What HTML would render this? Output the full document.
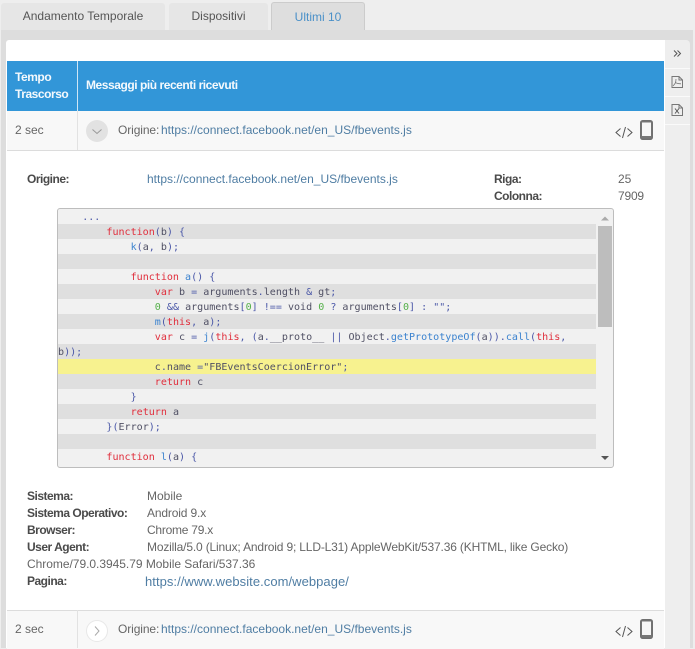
<!DOCTYPE html>
<html><head><meta charset="utf-8">
<style>
html,body{margin:0;padding:0}
body{width:695px;height:648px;overflow:hidden;position:relative;background:#eeeeee;font-family:"Liberation Sans",sans-serif;font-size:12px;color:#666}
.a{position:absolute;white-space:nowrap}
.tab{position:absolute;background:#e6e6e6;text-align:center;color:#555;border-radius:3px 3px 0 0;font-size:12px;line-height:27px;height:27px;top:3px}
.b{font-weight:bold;color:#4a4a4a;letter-spacing:-.5px}
.l{color:#4f7da3}
.ln{position:absolute;left:58px;width:538px;height:15px;white-space:pre;font:10.05px/17px "DejaVu Sans Mono","Liberation Mono",monospace;color:#505064}
.s{background:#dfdfdf}
.y{background:#f7f28f}
i{font-style:normal}
.r{color:#e02f3d}.f{color:#3c83cf}.p{color:#4b58a8}.n{color:#55b04a}
.h{color:#f4f9fd;font-weight:bold;line-height:17px;letter-spacing:-.45px}
</style></head><body>
<div class="tab" style="left:1px;width:164px">Andamento Temporale</div>
<div class="tab" style="left:169px;width:99px">Dispositivi</div>
<div class="tab" style="left:271px;width:94px;top:2px;height:28px;line-height:29px;background:#dedede;color:#4a90c8;border:1px solid #ccc;border-bottom:0;box-sizing:border-box">Ultimi 10</div>
<div class="a" style="left:1px;top:30px;width:692px;height:618px;background:#dddddd"></div>
<div class="a" style="left:6px;top:40px;width:659px;height:608px;background:#fff;border-radius:3px 0 0 0"></div>
<div class="a" style="left:665px;top:40px;width:25px;height:608px;background:#eeeeee;border-radius:0 4px 0 0"></div>
<div class="a" style="left:665px;top:68px;width:25px;height:1px;background:#fafafa"></div>
<div class="a" style="left:665px;top:96px;width:25px;height:1px;background:#fafafa"></div>
<div class="a" style="left:665px;top:124px;width:25px;height:1px;background:#fafafa"></div>
<svg class="a" style="left:665px;top:40px" width="25" height="85" viewBox="0 0 25 85" fill="none" stroke="#666" stroke-width="1">
<path d="M9 10.500l3 3-3 3M12.500 10.500l3 3-3 3" stroke="#555"/>
<path d="M7 36.500h7l3.500 3.500v7.500h-10.500zM14 36.500v3.500h3.500" stroke="#777"/>
<path d="M11 39c0 3.500-1 5-3 7M10 42.500c2 1 4 1.300 6 1.300" stroke="#777" stroke-width=".8"/>
<path d="M7 64.500h7l3.500 3.500v7.500h-10.500zM14 64.500v3.500h3.500" stroke="#777"/>
<path d="M10 68.500l4 5M14 68.500l-4 5" stroke="#555"/>
</svg>

<div class="a" style="left:7px;top:61px;width:657px;height:50px;background:#3296d8"></div>
<div class="a" style="left:77px;top:61px;width:1px;height:50px;background:#cfe6f6"></div>
<div class="a h" style="left:15px;top:69px">Tempo<br>Trascorso</div>
<div class="a h" style="left:86px;top:77px">Messaggi più recenti ricevuti</div>

<div class="a" style="left:7px;top:111px;width:657px;height:39px;background:#f8f8f8;border-bottom:1px solid #dcdcdc"></div>
<div class="a" style="left:77px;top:111px;width:1px;height:39px;background:#e2e2e2"></div>
<div class="a" style="left:15px;top:123px">2 sec</div>
<div class="a" style="left:86px;top:120px;width:22px;height:22px;border-radius:50%;background:#e2e2e2"></div>
<svg class="a" style="left:86px;top:120px" width="22" height="22" fill="none" stroke="#999" stroke-width="1"><path d="M6.500 9.500l4.500 4 4.500-4"/></svg>
<div class="a" style="left:118px;top:123px;letter-spacing:-.1px">Origine:</div>
<div class="a l" style="left:161px;top:123px">https://connect.facebook.net/en_US/fbevents.js</div>
<svg class="a" style="left:613px;top:119px" width="42" height="22" fill="none" stroke="#555" stroke-width="1"><path d="M7.500 9.500l-4.500 4 4.500 4M14.500 9.500l4.500 4-4.500 4M12.500 8l-3 11"/><rect x="27.700" y="1.700" width="11.600" height="18.600" rx="2" fill="#777" stroke="#707070" stroke-width="1.400"/><rect x="29" y="3.500" width="9" height="13.500" fill="#f6f6f6" stroke="none"/></svg>

<div class="a b" style="left:27px;top:172px">Origine:</div>
<div class="a l" style="left:147px;top:172px">https://connect.facebook.net/en_US/fbevents.js</div>
<div class="a b" style="left:494px;top:172px">Riga:</div>
<div class="a" style="left:618px;top:172px">25</div>
<div class="a b" style="left:494px;top:189px">Colonna:</div>
<div class="a" style="left:618px;top:189px;letter-spacing:-.2px">7909</div>

<div class="a" style="left:57px;top:208px;width:555px;height:258px;background:#f1f1f1;border:1px solid #bdbdbd;border-radius:3px"></div>
<div class="ln" style="top:209px">    <i class="p">...</i></div>
<div class="ln s" style="top:224px">        <i class="r">function</i><i class="p">(</i>b<i class="p">) {</i></div>
<div class="ln" style="top:239px">            <i class="f">k</i><i class="p">(</i>a<i class="p">,</i> b<i class="p">);</i></div>
<div class="ln s" style="top:254px"> </div>
<div class="ln" style="top:269px">            <i class="r">function</i> <i class="f">a</i><i class="p">() {</i></div>
<div class="ln s" style="top:284px">                <i class="r">var</i> b <i class="p">=</i> arguments<i class="p">.</i>length <i class="p">&amp;</i> gt<i class="p">;</i></div>
<div class="ln" style="top:299px">                <i class="n">0</i> <i class="p">&amp;&amp;</i> arguments<i class="p">[</i><i class="n">0</i><i class="p">] !==</i> void <i class="n">0</i> <i class="p">?</i> arguments<i class="p">[</i><i class="n">0</i><i class="p">] : "";</i></div>
<div class="ln s" style="top:314px">                <i class="f">m</i><i class="p">(</i><i class="r">this</i><i class="p">,</i> a<i class="p">);</i></div>
<div class="ln" style="top:329px">                <i class="r">var</i> c <i class="p">=</i> <i class="f">j</i><i class="p">(</i><i class="r">this</i><i class="p">, (</i>a<i class="p">.</i>__proto__ <i class="p">||</i> Object<i class="p">.</i><i class="f">getPrototypeOf</i><i class="p">(</i>a<i class="p">)).</i><i class="f">call</i><i class="p">(</i><i class="r">this</i><i class="p">,</i></div>
<div class="ln s" style="top:344px">b<i class="p">));</i></div>
<div class="ln y" style="top:359px">                c<i class="p">.</i>name <i class="p">=</i>"FBEventsCoercionError"<i class="p">;</i></div>
<div class="ln s" style="top:374px">                <i class="r">return</i> c</div>
<div class="ln" style="top:389px">            <i class="p">}</i></div>
<div class="ln s" style="top:404px">            <i class="r">return</i> a</div>
<div class="ln" style="top:419px">        <i class="p">}(</i>Error<i class="p">);</i></div>
<div class="ln s" style="top:434px"> </div>
<div class="ln" style="top:449px">        <i class="r">function</i> <i class="f">l</i><i class="p">(</i>a<i class="p">) {</i></div>
<div class="a" style="left:598px;top:226px;width:14px;height:101px;background:#bdbdbd"></div>
<svg class="a" style="left:598px;top:214px" width="14" height="8"><path d="M3 6.500l4-4 4 4z" fill="#aaa"/></svg>
<svg class="a" style="left:598px;top:454px" width="14" height="8"><path d="M3 2l4 4 4-4z" fill="#555"/></svg>

<div class="a b" style="left:27px;top:489px">Sistema:</div>
<div class="a" style="left:147px;top:489px">Mobile</div>
<div class="a b" style="left:27px;top:506px">Sistema Operativo:</div>
<div class="a" style="left:147px;top:506px;letter-spacing:-.15px">Android 9.x</div>
<div class="a b" style="left:27px;top:523px">Browser:</div>
<div class="a" style="left:147px;top:523px;letter-spacing:-.25px">Chrome 79.x</div>
<div class="a b" style="left:27px;top:540px">User Agent:</div>
<div class="a" style="left:147px;top:540px;letter-spacing:-.165px">Mozilla/5.0 (Linux; Android 9; LLD-L31) AppleWebKit/537.36 (KHTML, like Gecko)</div>
<div class="a" style="left:27px;top:557px;letter-spacing:-.03px">Chrome/79.0.3945.79 Mobile Safari/537.36</div>
<div class="a b" style="left:27px;top:574px">Pagina:</div>
<div class="a l" style="left:145px;top:574px;font-size:13px;letter-spacing:.05px">https://www.website.com/webpage/</div>

<div class="a" style="left:7px;top:610px;width:657px;height:38px;background:#f8f8f8;border-top:1px solid #dcdcdc"></div>
<div class="a" style="left:77px;top:610px;width:1px;height:38px;background:#e2e2e2"></div>
<div class="a" style="left:15px;top:622px">2 sec</div>
<div class="a" style="left:86px;top:620px;width:20px;height:20px;border-radius:50%;background:#fff;border:1px solid #e8e8e8"></div>
<svg class="a" style="left:86px;top:620px" width="22" height="22" fill="none" stroke="#aaa" stroke-width="1"><path d="M9 6.500l4 4.500-4 4.500"/></svg>
<div class="a" style="left:118px;top:622px;letter-spacing:-.1px">Origine:</div>
<div class="a l" style="left:161px;top:622px">https://connect.facebook.net/en_US/fbevents.js</div>
<svg class="a" style="left:613px;top:618px" width="42" height="22" fill="none" stroke="#555" stroke-width="1"><path d="M7.500 9.500l-4.500 4 4.500 4M14.500 9.500l4.500 4-4.500 4M12.500 8l-3 11"/><rect x="27.700" y="1.700" width="11.600" height="18.600" rx="2" fill="#777" stroke="#707070" stroke-width="1.400"/><rect x="29" y="3.500" width="9" height="13.500" fill="#f6f6f6" stroke="none"/></svg>
</body></html>
